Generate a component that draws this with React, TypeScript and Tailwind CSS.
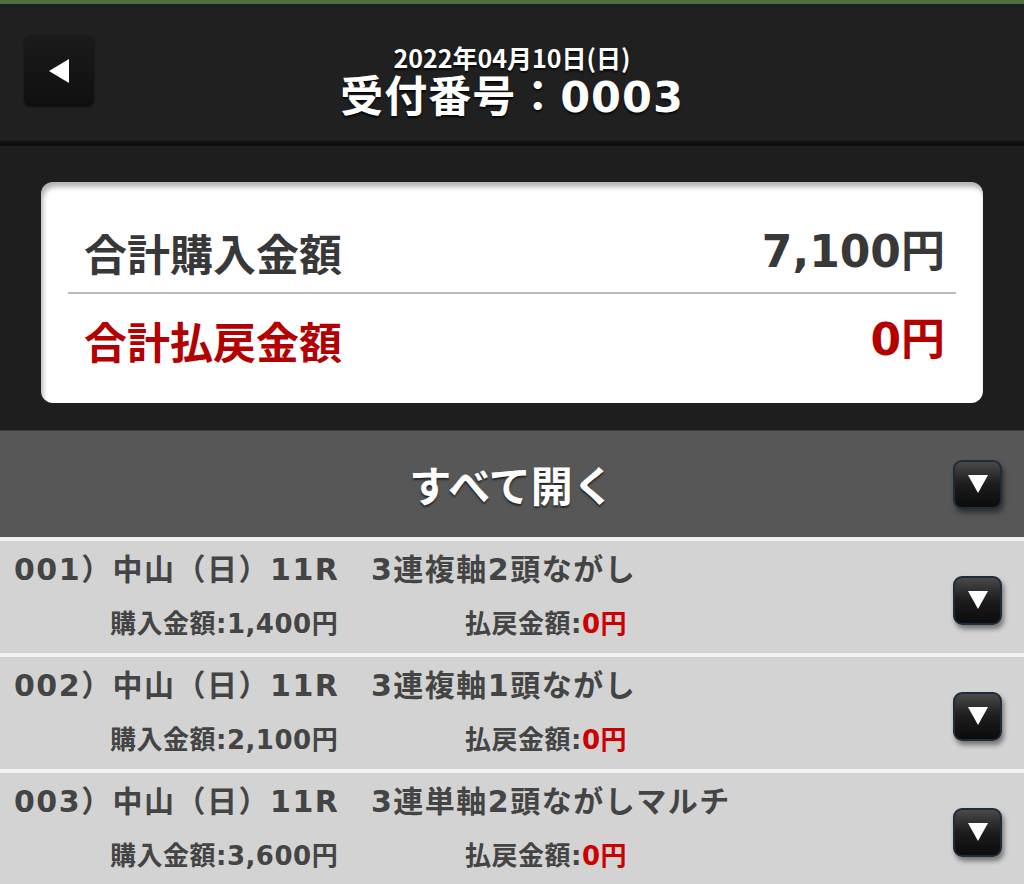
import React from 'react';

const JP = { fontFamily: '"Noto Sans CJK JP", "Noto Sans", sans-serif' };
// wide digits like the reference
const WIDE = { fontFamily: '"DejaVu Sans", "Noto Sans CJK JP", sans-serif' };

const bets = [
  { no: '001', type: '3連複軸2頭ながし', buy: '1,400円', pay: '0円' },
  { no: '002', type: '3連複軸1頭ながし', buy: '2,100円', pay: '0円' },
  { no: '003', type: '3連単軸2頭ながしマルチ', buy: '3,600円', pay: '0円' },
];

function DownButton() {
  return (
    <div className="w-[49px] h-[49px] rounded-[9px] border-2 border-[#1d2c3f] bg-gradient-to-b from-[#4a4a4a] via-[#1c1c1c] to-[#0c0c0c] shadow-[2px_4px_5px_rgba(0,0,0,0.45)] flex items-center justify-center">
      <svg width="22" height="20" viewBox="0 0 22 20">
        <polygon points="1,1 21,1 11,19" fill="#fff" />
      </svg>
    </div>
  );
}

export default function App() {
  return (
    <div className="w-[1024px] h-[884px] overflow-hidden bg-[#1e1e1e]" style={JP}>
      <div className="h-[4px] bg-[#4f6e3e]" />
      {/* header */}
      <div className="h-[137px] bg-[#202020] flex items-center pl-[24px]">
        <div className="w-[70px] h-[71px] mb-[4px] rounded-[7px] bg-gradient-to-b from-[#1b1b1b] to-[#0f0f0f] shadow-[0_1px_2px_rgba(0,0,0,0.6)] flex items-center justify-center">
          <svg width="24" height="26" viewBox="0 0 24 26">
            <polygon points="22,1 22,25 2,13" fill="#fff" />
          </svg>
        </div>
        <div className="flex-1 flex flex-col items-center text-white font-bold [text-shadow:0_2px_2px_rgba(0,0,0,0.8)] mt-[18px]">
          <div className="text-[25px] leading-[30px]">2022年04月10日(日)</div>
          <div className="text-[43px] leading-[50px] tracking-[1px]" style={WIDE}>受付番号：0003</div>
        </div>
        <div className="w-[94px]" />
      </div>
      <div className="h-[5px] bg-[#0f0f0f]" />

      {/* totals */}
      <div className="px-[41px] pt-[36px] pb-[27px]">
        <div className="bg-white rounded-[12px] h-[221px] shadow-[inset_2px_5px_5px_rgba(0,0,0,0.3)] flex flex-col font-bold">
          <div className="h-[110px] flex items-end justify-between pl-[43px] pr-[38px] pb-[16px] text-[#383838]">
            <span className="text-[43px] leading-[48px]">合計購入金額</span>
            <span className="text-[44px] leading-[48px]" style={WIDE}>7,100円</span>
          </div>
          <div className="mx-[27px] h-[2px] bg-[#bdbdbd]" />
          <div className="flex justify-between pl-[43px] pr-[38px] pt-[22px] text-[#b30000]">
            <span className="text-[43px] leading-[48px]">合計払戻金額</span>
            <span className="text-[44px] leading-[48px]" style={WIDE}>0円</span>
          </div>
        </div>
      </div>

      {/* open all */}
      <div className="h-[107px] border-t border-[#3a3a3a] bg-[#575757] flex items-center pr-[22px]">
        <div className="w-[71px]" />
        <div className="flex-1 text-center text-white font-bold text-[42px] leading-[48px] [text-shadow:0_2px_2px_rgba(0,0,0,0.6)]">
          すべて開く
        </div>
        <DownButton />
      </div>
      <div className="h-[4px] bg-[#f2f2f2]" />

      {/* bet rows */}
      <div className="flex flex-col gap-[4px] bg-[#f2f2f2]">
        {bets.map((b) => (
          <div key={b.no} className="h-[112px] bg-[#d3d3d3] flex items-center pr-[22px] text-[#444] font-bold">
            <div className="flex-1 flex flex-col pl-[14px] h-full" style={WIDE}>
              <div className="text-[30px] leading-[54px] tracking-[1.5px] mt-[2px] whitespace-nowrap">
                {b.no}）中山（日）11R　{b.type}
              </div>
              <div className="flex text-[26px] leading-[34px] tracking-[0.5px] mt-[10px] whitespace-nowrap">
                <span className="ml-[96px] w-[355px]">購入金額:{b.buy}</span>
                <span>
                  払戻金額:<span className="text-[#cc0000]">{b.pay}</span>
                </span>
              </div>
            </div>
            <div className="mt-[6px]">
              <DownButton />
            </div>
          </div>
        ))}
      </div>
    </div>
  );
}
